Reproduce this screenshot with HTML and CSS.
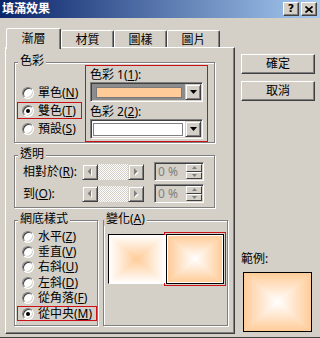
FILE: index.html
```html
<!DOCTYPE html>
<html lang="zh-Hant">
<head>
    <meta charset="UTF-8">
    <title>填滿效果</title>
    <link rel="stylesheet" href="styles.css">
</head>
<body>
    <div class="dialog">
        <div class="titlebar">
            <span class="title">填滿效果</span>
            <div class="title-btns">
                <span class="cap-btn help">?</span>
                <span class="cap-btn">
                    <svg width="8" height="7" viewBox="0 0 8 7"><path d="M0.5 0.5 L7.5 6.5 M7.5 0.5 L0.5 6.5" stroke="#000" stroke-width="1.6"/></svg>
                </span>
            </div>
        </div>

        <div class="main">
            <div class="tab-area">
                <ul class="tabs">
                    <li class="tab active">漸層</li>
                    <li class="tab">材質</li>
                    <li class="tab">圖樣</li>
                    <li class="tab">圖片</li>
                </ul>

                <div class="panel">
                    <!-- 色彩 -->
                    <div class="group colors">
                        <span class="group-title">色彩</span>
                        <div class="radio-list">
                            <div class="radio-row"><span class="radio"></span><span>單色(<u>N</u>)</span></div>
                            <div class="radio-row marked"><span class="radio checked"></span><span>雙色(<u>T</u>)</span></div>
                            <div class="radio-row"><span class="radio"></span><span>預設(<u>S</u>)</span></div>
                        </div>
                        <div class="color-pick marked">
                            <div class="field-label">色彩 1(<u>1</u>):</div>
                            <div class="combo">
                                <div class="combo-edit focused"><span class="swatch peach"></span></div>
                                <span class="drop-btn"><svg width="7" height="4" viewBox="0 0 7 4"><polygon points="0,0 7,0 3.5,4" fill="#000"/></svg></span>
                            </div>
                            <div class="field-label second">色彩 2(<u>2</u>):</div>
                            <div class="combo">
                                <div class="combo-edit"><span class="swatch white"></span></div>
                                <span class="drop-btn"><svg width="7" height="4" viewBox="0 0 7 4"><polygon points="0,0 7,0 3.5,4" fill="#000"/></svg></span>
                            </div>
                        </div>
                    </div>

                    <!-- 透明 -->
                    <div class="group transp">
                        <span class="group-title">透明</span>
                        <div class="slide-row">
                            <span class="slide-label">相對於(<u>R</u>):</span>
                            <div class="scrollbar">
                                <span class="sb-btn"><svg width="14" height="14" viewBox="0 0 14 14"><polygon points="9,4 9,11 5.5,7.5" fill="#fff"/><polygon points="8,3 8,10 4.5,6.5" fill="#808080"/></svg></span>
                                <span class="sb-track"></span>
                                <span class="sb-btn"><svg width="14" height="14" viewBox="0 0 14 14"><polygon points="6,4 6,11 9.5,7.5" fill="#fff"/><polygon points="5,3 5,10 8.5,6.5" fill="#808080"/></svg></span>
                            </div>
                            <div class="spin">
                                <span class="spin-text">0 %</span>
                                <div class="spin-btns">
                                    <span class="spin-btn"><svg width="5" height="3" viewBox="0 0 5 3"><polygon points="2.5,0 5,3 0,3" fill="#808080"/></svg></span>
                                    <span class="spin-btn"><svg width="5" height="3" viewBox="0 0 5 3"><polygon points="0,0 5,0 2.5,3" fill="#808080"/></svg></span>
                                </div>
                            </div>
                        </div>
                        <div class="slide-row">
                            <span class="slide-label">到(<u>O</u>):</span>
                            <div class="scrollbar">
                                <span class="sb-btn"><svg width="14" height="14" viewBox="0 0 14 14"><polygon points="9,4 9,11 5.5,7.5" fill="#fff"/><polygon points="8,3 8,10 4.5,6.5" fill="#808080"/></svg></span>
                                <span class="sb-track"></span>
                                <span class="sb-btn"><svg width="14" height="14" viewBox="0 0 14 14"><polygon points="6,4 6,11 9.5,7.5" fill="#fff"/><polygon points="5,3 5,10 8.5,6.5" fill="#808080"/></svg></span>
                            </div>
                            <div class="spin">
                                <span class="spin-text">0 %</span>
                                <div class="spin-btns">
                                    <span class="spin-btn"><svg width="5" height="3" viewBox="0 0 5 3"><polygon points="2.5,0 5,3 0,3" fill="#808080"/></svg></span>
                                    <span class="spin-btn"><svg width="5" height="3" viewBox="0 0 5 3"><polygon points="0,0 5,0 2.5,3" fill="#808080"/></svg></span>
                                </div>
                            </div>
                        </div>
                    </div>

                    <div class="bottom-row">
                        <!-- 網底樣式 -->
                        <div class="group styles">
                            <span class="group-title">網底樣式</span>
                            <div class="style-list">
                                <div class="radio-row"><span class="radio"></span><span>水平(<u>Z</u>)</span></div>
                                <div class="radio-row"><span class="radio"></span><span>垂直(<u>V</u>)</span></div>
                                <div class="radio-row"><span class="radio"></span><span>右斜(<u>U</u>)</span></div>
                                <div class="radio-row"><span class="radio"></span><span>左斜(<u>D</u>)</span></div>
                                <div class="radio-row"><span class="radio"></span><span>從角落(<u>F</u>)</span></div>
                                <div class="radio-row marked"><span class="radio checked"></span><span>從中央(<u>M</u>)</span></div>
                            </div>
                        </div>

                        <!-- 變化 -->
                        <div class="group variants">
                            <span class="group-title tight">變化(<u>A</u>)</span>
                            <div class="variant-list">
                                <div class="variant sunken"><div class="grad inner-peach"></div></div>
                                <div class="variant picked"><div class="grad outer-peach"></div></div>
                            </div>
                        </div>
                    </div>
                </div>
            </div>

            <div class="side">
                <div class="btn">確定</div>
                <div class="btn next">取消</div>
                <div class="sample-label">範例:</div>
                <div class="sample"><div class="grad outer-peach"></div></div>
            </div>
        </div>
    </div>
</body>
</html>
```

FILE: styles.css
```css
/* base */
body {
    margin: 0;
    font: 12px "Noto Sans", "Noto Sans CJK TC", sans-serif;
    color: #000;
}

u {
    text-decoration: underline;
}

.dialog {
    width: 320px;
    height: 338px;
    box-sizing: border-box;
    background: #d4d0c8;
    border-bottom: 1px solid #404040;
    overflow: hidden;
}

/* title bar */
.titlebar {
    height: 18px;
    display: flex;
    align-items: center;
    justify-content: space-between;
    padding: 0 3px 0 2px;
    background: linear-gradient(to right, #0a246a, #a6caf0);
}

.title {
    color: #fff;
    font-weight: bold;
    line-height: 14px;
}

.title-btns {
    display: flex;
    gap: 2px;
}

.cap-btn {
    width: 16px;
    height: 14px;
    box-sizing: border-box;
    display: flex;
    align-items: center;
    justify-content: center;
    background: #d4d0c8;
    border: 1px solid;
    border-color: #fff #404040 #404040 #fff;
    box-shadow: inset -1px -1px #808080;
}

.cap-btn.help {
    font: bold 11px "DejaVu Sans", sans-serif;
    line-height: 12px;
}

/* main area */
.main {
    display: flex;
}

.tab-area {
    width: 230px;
    margin-left: 5px;
    padding-top: 10px;
}

.tabs {
    display: flex;
    align-items: flex-end;
    height: 19px;
    margin: 0;
    padding: 0 0 0 1px;
    list-style: none;
}

.tab {
    width: 53px;
    height: 17px;
    box-sizing: border-box;
    border: 1px solid;
    border-bottom: 0;
    border-color: #fff #404040 transparent #fff;
    border-radius: 2px 2px 0 0;
    box-shadow: inset -1px 0 #808080;
    text-align: center;
    line-height: 14px;
    padding-top: 2px;
}

.tab.active {
    width: 55px;
    height: 21px;
    margin-bottom: -2px;
    padding-top: 3px;
    position: relative;
    z-index: 1;
    background: #d4d0c8;
}

.panel {
    height: 287px;
    box-sizing: border-box;
    border: 1px solid;
    border-color: #fff #404040 #404040 #fff;
    box-shadow: inset -1px -1px #808080;
    padding: 14px 0 0 8px;
}

/* group boxes */
.group {
    position: relative;
    box-sizing: border-box;
    border: 1px solid #808080;
    box-shadow: inset 1px 1px #fff, 1px 1px #fff;
}

.group-title {
    position: absolute;
    top: -9px;
    left: 3px;
    padding: 0 2px;
    line-height: 14px;
    background: #d4d0c8;
}

.group-title.tight {
    left: 0;
}

.colors {
    width: 201px;
    height: 81px;
    display: flex;
}

.radio-list {
    display: flex;
    flex-direction: column;
    gap: 1px;
    padding: 21px 0 0 2px;
}

.radio-row {
    display: flex;
    align-items: center;
    gap: 4px;
    width: 65px;
    height: 17px;
    box-sizing: border-box;
    border: 1px solid transparent;
    padding-left: 4px;
    line-height: 14px;
    white-space: nowrap;
}

.marked {
    border: 1px solid #cc1018;
}

.radio {
    width: 12px;
    height: 12px;
    box-sizing: border-box;
    flex: none;
    position: relative;
    border-radius: 50%;
    border: 1px solid;
    border-color: #808080 #fff #fff #808080;
    box-shadow: inset 1px 1px #404040, inset -1px -1px #d4d0c8;
    background: #fff;
}

.radio.checked::after {
    content: "";
    position: absolute;
    left: 3px;
    top: 3px;
    width: 4px;
    height: 4px;
    border-radius: 50%;
    background: #000;
}

.color-pick {
    width: 123px;
    height: 77px;
    box-sizing: border-box;
    margin: 2px 0 0 3px;
    padding: 2px 0 0 4px;
}

.field-label {
    line-height: 14px;
}

.field-label.second {
    margin-top: 3px;
}

.combo {
    width: 113px;
    height: 20px;
    box-sizing: border-box;
    display: flex;
    padding: 1px;
    border: 1px solid;
    border-color: #808080 #fff #fff #808080;
    box-shadow: inset 1px 1px #404040, inset -1px -1px #d4d0c8;
    background: #fff;
}

.combo-edit {
    flex: 1;
    display: flex;
    padding: 2px 2px 1px 1px;
}

.combo-edit.focused {
    background: #8c8c8c;
    padding: 3px 3px 2px 4px;
}

.swatch {
    flex: 1;
    border: 1px solid #808080;
}

.swatch.peach {
    background: #ffcc99;
    border-color: #7a7a7a;
}

.swatch.white {
    background: #fff;
}

.drop-btn,
.sb-btn {
    width: 16px;
    height: 16px;
    box-sizing: border-box;
    flex: none;
    display: flex;
    align-items: center;
    justify-content: center;
    background: #d4d0c8;
    border: 1px solid;
    border-color: #d4d0c8 #404040 #404040 #d4d0c8;
    box-shadow: inset 1px 1px #fff, inset -1px -1px #808080;
}

/* transparency */
.transp {
    width: 201px;
    height: 53px;
    margin-top: 12px;
    padding: 6px 0 0 8px;
    display: flex;
    flex-direction: column;
    gap: 3px;
}

.slide-row {
    display: flex;
    align-items: center;
    height: 19px;
}

.slide-label {
    width: 59px;
    line-height: 14px;
    white-space: nowrap;
}

.scrollbar {
    display: flex;
    height: 16px;
}

.sb-track {
    width: 30px;
    background: repeating-conic-gradient(#fff 0 25%, #d4d0c8 0 50%) 0 0 / 2px 2px;
}

.spin {
    width: 50px;
    height: 19px;
    box-sizing: border-box;
    margin-left: 10px;
    display: flex;
    padding: 1px;
    border: 1px solid;
    border-color: #808080 #fff #fff #808080;
    box-shadow: inset 1px 1px #404040, inset -1px -1px #d4d0c8;
}

.spin-text {
    flex: 1;
    padding-left: 2px;
    color: #808080;
    line-height: 15px;
}

.spin-btns {
    width: 16px;
    display: flex;
    flex-direction: column;
}

.spin-btn {
    flex: 1;
    display: flex;
    align-items: center;
    justify-content: center;
    box-sizing: border-box;
    border: 1px solid;
    border-color: #fff #404040 #404040 #fff;
}

/* bottom groups */
.bottom-row {
    display: flex;
    gap: 5px;
    margin-top: 12px;
}

.styles {
    width: 84px;
    height: 106px;
    padding: 8px 0 0 2px;
}

.style-list .radio-row {
    width: 80px;
    height: 15.4px;
}

.variants {
    width: 125px;
    height: 106px;
    padding: 13px 0 0 4px;
}

.variant-list {
    display: flex;
}

.variant {
    width: 58px;
    height: 50px;
    box-sizing: border-box;
    display: flex;
}

.variant.sunken {
    border: 1px solid;
    border-color: #000 #fff #fff #000;
}

.variant.picked {
    border: 1px solid #000;
    padding: 1px;
    background: #fff;
    outline: 1px solid #cc1018;
    outline-offset: 1px;
}

/* rectangular gradient: vertical base, horizontal in the side triangles */
.grad {
    flex: 1;
    position: relative;
    background: linear-gradient(to bottom, var(--edge), var(--mid) 50%, var(--edge));
}

.grad::after {
    content: "";
    position: absolute;
    inset: 0;
    background: linear-gradient(to right, var(--edge), var(--mid) 50%, var(--edge));
    clip-path: polygon(0 0, 50% 50%, 100% 0, 100% 100%, 50% 50%, 0 100%);
}

.inner-peach {
    --edge: #fff;
    --mid: #ffcc99;
}

.outer-peach {
    --edge: #ffcc99;
    --mid: #fff;
}

/* right column */
.side {
    width: 74px;
    margin-left: 6px;
    padding-top: 36px;
}

.btn {
    height: 20px;
    box-sizing: border-box;
    border: 1px solid;
    border-color: #fff #404040 #404040 #fff;
    box-shadow: inset -1px -1px #808080;
    text-align: center;
    line-height: 18px;
}

.btn.next {
    margin-top: 7px;
}

.sample-label {
    margin-top: 151px;
    line-height: 14px;
}

.sample {
    width: 69px;
    height: 60px;
    box-sizing: border-box;
    margin: 6px 0 0 2px;
    border: 1px solid #000;
    display: flex;
}
```
